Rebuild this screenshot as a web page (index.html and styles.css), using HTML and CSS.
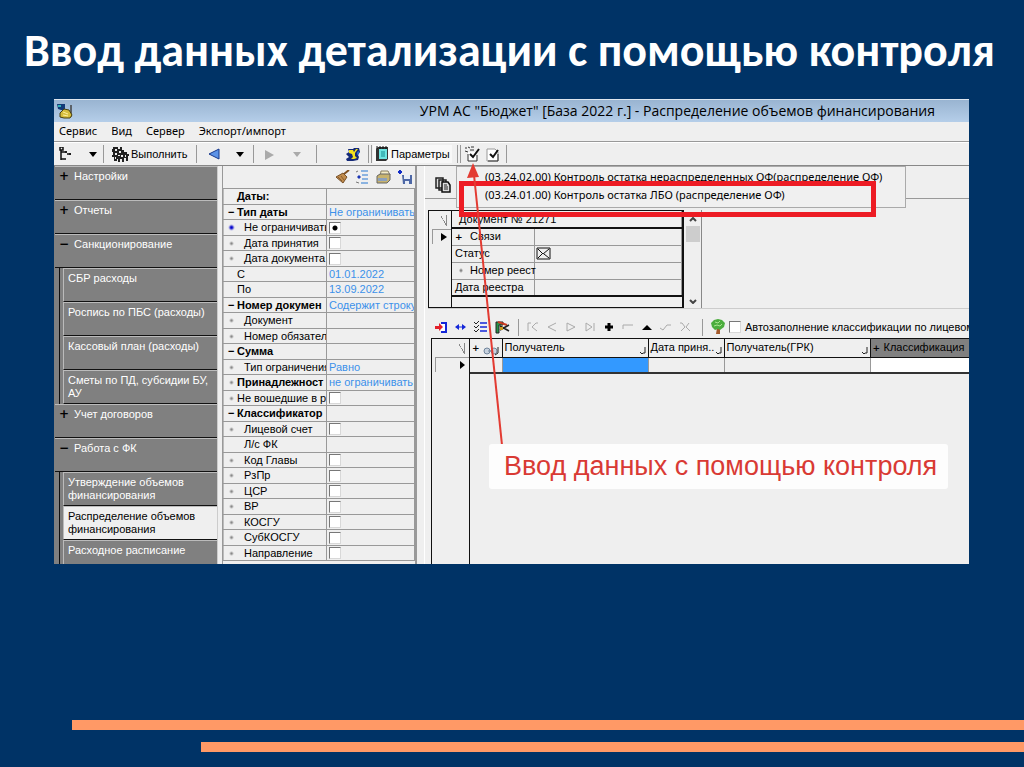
FILE: index.html
```html
<!DOCTYPE html>
<html lang="ru">
<head>
<meta charset="utf-8">
<title>Ввод данных детализации с помощью контроля</title>
<link rel="stylesheet" href="styles.css">
</head>
<body>
<main class="slide">
<h1 class="slide-title">Ввод данных детализации с помощью контроля</h1>

<section class="window">
  <header class="titlebar">
    <svg class="app-icon" width="18" height="16" viewBox="0 0 18 16"><path d="M1 1h8v6H5l-3-1z" fill="#123a78"/><path d="M2 2h3v2H2z" fill="#2fb3b5"/><path d="M15 2v11H6" fill="none" stroke="#444" stroke-width="1.5"/><path d="M4 10l4-4 5 1 3 5-2 3H8l-4-1z" fill="#d5bd3c" stroke="#4a4010"/><path d="M7 9l5 2M7 12l5 1" stroke="#fff09a"/></svg>
    <h2 class="caption">УРМ АС "Бюджет" [База 2022 г.] - Распределение объемов финансирования</h2>
  </header>
  <nav class="menubar">
    <button class="menu">Сервис</button><button class="menu">Вид</button><button class="menu">Сервер</button><button class="menu">Экспорт/импорт</button>
  </nav>
  <div class="toolbar">
    <div class="group g-tree">
      <button class="tool" aria-label="Дерево"><svg width="14" height="14" viewBox="0 0 14 14"><path d="M1 0h3v3H1zM2 3v10M2 5h6M8 7h4M2 12h5M7 4v2M11 6v2" fill="none" stroke="#111" stroke-width="1.5"/></svg></button>
      <button class="tool" aria-label="Список"><svg width="8" height="5"><path d="M0 0h8L4 5z"/></svg></button>
    </div>
    <div class="group g-run">
      <button class="tool"><svg width="17" height="15" viewBox="0 0 17 15"><path d="M1 0h5v2h2V0h2v3h2v2h3v2h2v2h-1v5h-2v-3h-2v4h-2v-3H8v3H6v-3H5v2H2v-4H0V8h1V5H0V2h1z" fill="#222"/><path d="M3 2h2v2H3zM7 4h2v2H7zM3 6h2v2H3zM6 8h2v1H6zM3 10h1v2H3zM9 8h2v2H9zM13 8h1v2h-1z" fill="#eee"/></svg><span>Выполнить</span></button>
    </div>
    <div class="group g-back">
      <button class="tool" aria-label="Назад"><svg width="12" height="12"><path d="M11 1v10L1 6z" fill="#5d93e6" stroke="#17388c"/></svg></button>
      <button class="tool" aria-label="История назад"><svg width="8" height="5"><path d="M0 0h8L4 5z"/></svg></button>
    </div>
    <div class="group g-next">
      <button class="tool" aria-label="Вперед"><svg width="11" height="11"><path d="M1 1v10l9-5z" fill="#aaa"/></svg></button>
      <button class="tool" aria-label="История вперед"><svg width="8" height="5"><path d="M0 0h8L4 5z" fill="#aaa"/></svg></button>
    </div>
    <div class="group g-refresh">
      <button class="tool" aria-label="Обновить"><svg width="16" height="15" viewBox="0 0 16 15"><path d="M3 2h5l1-1h5l1 4-2 3 1 2-1 3-5 1H2l-1-2 3-2-3-3 3-2z" fill="#152a78"/><path d="M4 3h4l1 2 2-3h2l-3 4v3l2 2-3 1H6l2-2-1-3-3-1z" fill="#f4e21c"/><path d="M12 5l2-1v3l-2 1z" fill="#2a66c8"/></svg></button>
    </div>
    <div class="group g-params">
      <button class="tool pressed"><svg width="14" height="16" viewBox="0 0 14 16"><path d="M1 3l2-2h10v12l-2 2H1z" fill="#333"/><path d="M4 3h8v10H4z" fill="#6de4e1"/><path d="M2 0v3M5 0v3M8 0v3M11 0v3" stroke="#111"/><path d="M6 6h4M6 8h4M6 10h4" stroke="#158d91"/></svg><span>Параметры</span></button>
    </div>
    <div class="group g-checks">
      <button class="tool" aria-label="Контроль списком"><svg width="16" height="16" viewBox="0 0 16 16"><path d="M4 6h8v9H4z" fill="#fff"/><path d="M4 8v7h9V9M1 2h2M4 1l2 1M1 5l3 1M6 4h4M7 1h3" fill="none" stroke="#333"/><path d="M6 8l3 3 6-8" fill="none" stroke="#111" stroke-width="2"/></svg></button>
      <button class="tool" aria-label="Контроль"><svg width="14" height="15" viewBox="0 0 14 15"><path d="M1 2h8l3 3v9H1z" fill="#fff" stroke="#999"/><path d="M12 7v7H2" fill="none" stroke="#333"/><path d="M4 7l3 3 5-7" fill="none" stroke="#111" stroke-width="2"/></svg></button>
    </div>
  </div>

  <div class="workspace">
    <nav class="sidebar">
      <a href="#" class="nav"><b>+</b>Настройки</a>
      <a href="#" class="nav"><b>+</b>Отчеты</a>
      <a href="#" class="nav"><b>−</b>Санкционирование</a>
      <div class="branch">
        <a href="#" class="nav">СБР расходы</a>
        <a href="#" class="nav">Роспись по ПБС (расходы)</a>
        <a href="#" class="nav">Кассовый план (расходы)</a>
        <a href="#" class="nav">Сметы по ПД, субсидии БУ, АУ</a>
      </div>
      <a href="#" class="nav"><b>+</b>Учет договоров</a>
      <a href="#" class="nav"><b>−</b>Работа с ФК</a>
      <div class="branch">
        <a href="#" class="nav">Утверждение объемов финансирования</a>
        <a href="#" class="nav current">Распределение объемов финансирования</a>
        <a href="#" class="nav last">Расходное расписание</a>
      </div>
    </nav>

    <section class="params">
      <div class="params-tools">
        <button class="tool" aria-label="Очистить"><svg width="15" height="14" viewBox="0 0 15 14"><path d="M14 0L9 4" stroke="#805020" stroke-width="2"/><path d="M8 3l4 4-4 6-7-6z" fill="#c08b4b" stroke="#76502a"/><path d="M3 7l4 4M6 6l3 4" stroke="#8a5c2c"/></svg></button>
        <button class="tool" aria-label="Список"><svg width="14" height="14" viewBox="0 0 14 14"><path d="M5 1h7M6 5h6M6 9h6M5 13h7" stroke="#6ba0dc" stroke-width="1.5"/><path d="M0 2l2-1M0 12l3 1" stroke="#777"/><path d="M1 7l2-2 2 2-2 2z" fill="#1b35b5"/></svg></button>
        <button class="tool" aria-label="Печать"><svg width="16" height="14" viewBox="0 0 16 14"><path d="M5 1h7l2 4-2 2H4z" fill="#f5edc7" stroke="#887f60"/><path d="M1 6l3-2h10v6l-3 3H1z" fill="#c7b36e" stroke="#666"/><path d="M2 8h9v3H2z" fill="#8ca0bb"/></svg></button>
        <button class="tool" aria-label="Сохранить"><svg width="14" height="14" viewBox="0 0 14 14"><path d="M0 2h4M2 0v4" stroke="#112cc7" stroke-width="2"/><path d="M4 5h10v9H5z" fill="#4e68a6"/><path d="M6 5h6v4H6zM7 11h4v3H7z" fill="#e7edf7"/></svg></button>
      </div>
      <table class="props">
        <colgroup><col class="c-name"><col></colgroup>
        <tr class="head"><th class="in1">Даты:</th><td></td></tr>
        <tr class="head"><th><span class="fold">−</span>Тип даты</th><td>Не ограничивать</td></tr>
        <tr class="dot on"><th><label for="p1">Не ограничивать</label></th><td><input type="radio" id="p1" checked></td></tr>
        <tr class="dot"><th><label for="p2">Дата принятия</label></th><td><input type="checkbox" id="p2"></td></tr>
        <tr class="dot"><th><label for="p3">Дата документа</label></th><td><input type="checkbox" id="p3"></td></tr>
        <tr><th class="in1">С</th><td>01.01.2022</td></tr>
        <tr><th class="in1">По</th><td>13.09.2022</td></tr>
        <tr class="head"><th><span class="fold">−</span>Номер докумен</th><td>Содержит строку</td></tr>
        <tr class="dot"><th>Документ</th><td></td></tr>
        <tr class="dot"><th>Номер обязател</th><td></td></tr>
        <tr class="head"><th><span class="fold">−</span>Сумма</th><td></td></tr>
        <tr class="dot"><th>Тип ограничения</th><td>Равно</td></tr>
        <tr class="head dot near"><th>Принадлежност</th><td>не ограничивать</td></tr>
        <tr class="dot near"><th><label for="p4">Не вошедшие в ре</label></th><td><input type="checkbox" id="p4"></td></tr>
        <tr class="head"><th><span class="fold">−</span>Классификатор</th><td></td></tr>
        <tr class="dot"><th><label for="p5">Лицевой счет</label></th><td><input type="checkbox" id="p5"></td></tr>
        <tr><th class="in2">Л/с ФК</th><td></td></tr>
        <tr class="dot"><th><label for="p6">Код Главы</label></th><td><input type="checkbox" id="p6"></td></tr>
        <tr class="dot"><th><label for="p7">РзПр</label></th><td><input type="checkbox" id="p7"></td></tr>
        <tr class="dot"><th><label for="p8">ЦСР</label></th><td><input type="checkbox" id="p8"></td></tr>
        <tr class="dot"><th><label for="p9">ВР</label></th><td><input type="checkbox" id="p9"></td></tr>
        <tr class="dot"><th><label for="p10">КОСГУ</label></th><td><input type="checkbox" id="p10"></td></tr>
        <tr class="dot"><th><label for="p11">СубКОСГУ</label></th><td><input type="checkbox" id="p11"></td></tr>
        <tr class="dot"><th><label for="p12">Направление</label></th><td><input type="checkbox" id="p12"></td></tr>
      </table>
    </section>

    <section class="content">
      <div class="doc-tools">
        <button class="tool" aria-label="Копировать"><svg width="16" height="16" viewBox="0 0 16 16"><path d="M1 1h7v10H1zM4 3h7v10H4z" fill="#ddd" stroke="#222" stroke-width="1.5"/><path d="M7 5h6l2 3v7H7z" fill="#ddd" stroke="#111" stroke-width="1.5"/><path d="M9 8h3M9 10h4M9 12h4" stroke="#222"/></svg></button>
      </div>
      <div class="doc">
        <div class="doc-frame">
          <div class="row-marks"><i class="corner"></i><i class="cell-mark"><svg width="6" height="8"><path d="M0 0v8l6-4z"/></svg></i></div>
          <table class="doc-table">
            <colgroup><col class="c-doc"><col></colgroup>
            <tr><th colspan="2" class="doc-title">Документ № 21271</th></tr>
            <tr><th><span class="plus">+</span>Связи</th><td></td></tr>
            <tr><th>Статус</th><td><svg width="15" height="13" viewBox="0 0 15 13"><path d="M1 1h13v11H1zM2 2l5 5 6-5M2 11l4-4M13 11L8 7" fill="none" stroke="#111"/></svg></td></tr>
            <tr><th class="doc-sub">Номер реест</th><td></td></tr>
            <tr><th>Дата реестра</th><td></td></tr>
          </table>
        </div>
        <div class="scroll">
          <svg width="8" height="5"><path d="M1 4l3-3 3 3" fill="none" stroke="#444" stroke-width="2"/></svg>
          <i class="thumb"></i>
          <svg width="8" height="5"><path d="M1 1l3 3 3-3" fill="none" stroke="#444" stroke-width="2"/></svg>
        </div>
      </div>
      <div class="detail-tools">
        <button class="tool" aria-label="Выход"><svg width="12" height="11" viewBox="0 0 12 11"><path d="M6 1h5v9H6" fill="#fff" stroke="#1427d8" stroke-width="2"/><path d="M0 4h4V1l4 4-4 4V7H0z" fill="#e3202a"/></svg></button>
        <button class="tool" aria-label="Ширина"><svg width="11" height="8"><path d="M0 4l4-3v6zM11 4L7 1v6z" fill="#1427d8"/><path d="M3 4h5" stroke="#1427d8"/></svg></button>
        <button class="tool" aria-label="Отметки"><svg width="13" height="12" viewBox="0 0 13 12"><path d="M6 2h7M6 6h7M6 10h7" stroke="#1427d8" stroke-width="1.5"/><path d="M0 1l2 2 3-3M0 5l2 2 3-3M0 9l2 2 3-3" fill="none" stroke="#222"/></svg></button>
        <button class="tool" aria-label="Правка"><svg width="15" height="13" viewBox="0 0 15 13"><path d="M1 1h7v3H4v8H1z" fill="#279449" stroke="#222"/><path d="M3 1l9 3" stroke="#cc3b22" stroke-width="2"/><path d="M5 5l9 5M5 9l9-5" stroke="#222" stroke-width="1.5"/><path d="M5 6h3v3H5z" fill="#c99a1c"/></svg></button>
        <span class="bar"></span>
        <button class="tool dim" aria-label="Первая"><svg width="12" height="10"><path d="M1 9V1h3M11 1H9L5 5l5 4" fill="none" stroke="#aaa"/></svg></button>
        <button class="tool dim" aria-label="Предыдущая"><svg width="12" height="10"><path d="M10 1L2 5l8 4" fill="none" stroke="#aaa"/></svg></button>
        <button class="tool dim" aria-label="Следующая"><svg width="12" height="10"><path d="M2 9V1l8 4-8 4" fill="none" stroke="#aaa"/></svg></button>
        <button class="tool dim" aria-label="Последняя"><svg width="12" height="10"><path d="M2 9V1l6 4-6 4M10 1v8" fill="none" stroke="#aaa"/></svg></button>
        <button class="tool dim" aria-label="Добавить"><svg width="10" height="10"><path d="M5 1v8M1 5h8" stroke="#000" stroke-width="3"/></svg></button>
        <button class="tool dim" aria-label="Удалить"><svg width="12" height="6"><path d="M1 5V1h10" fill="none" stroke="#aaa"/></svg></button>
        <button class="tool dim" aria-label="Изменить"><svg width="10" height="5"><path d="M0 5l5-5 5 5z"/></svg></button>
        <button class="tool dim" aria-label="Сохранить запись"><svg width="14" height="10"><path d="M1 6l3 2 4-5h4" fill="none" stroke="#aaa"/></svg></button>
        <button class="tool dim" aria-label="Отменить"><svg width="12" height="10"><path d="M1 1h2l3 4-4 4M10 1L7 5l4 4" fill="none" stroke="#aaa"/></svg></button>
        <span class="bar end"></span>
        <svg class="tree" width="14" height="16" viewBox="0 0 14 16"><path d="M6 9h3v6H5z" fill="#a55c2e"/><path d="M3 1l4-1 4 1 3 3-1 4-4 3-2-1-3 1-3-3-1-4z" fill="#4cad3e"/><path d="M4 3l3 1 2-2M3 7l3-1 3 1 2-2" stroke="#a8e58f" fill="none"/></svg>
        <input type="checkbox" id="auto"><label for="auto">Автозаполнение классификации по лицевом</label>
      </div>
      <div class="detail">
        <div class="row-marks wide"><i class="corner"></i><i class="cell-mark"><svg width="5" height="8"><path d="M0 0v8l5-4z"/></svg></i></div>
        <div class="detail-scroll">
          <table class="detail-table">
            <colgroup><col class="c-link"><col class="c-rec"><col class="c-date"><col class="c-rec"><col></colgroup>
            <thead><tr>
              <th><span class="th"><span class="plus">+</span><svg width="17" height="10" viewBox="0 0 17 10"><path d="M1 5a3 3 0 016 0 3 3 0 01-6 0M8 5a3 3 0 016 0 3 3 0 01-6 0M5 5h5" fill="#c8d2de" stroke="#71859c"/><path d="M15 1v6l-3 2" fill="none" stroke="#222"/></svg></span></th>
              <th><span class="th">Получатель<svg width="7" height="8"><path d="M6 0v6H4L3 7 1 5" fill="none" stroke="#222"/></svg></span></th>
              <th><span class="th">Дата приня..<svg width="7" height="8"><path d="M6 0v6H4L3 7 1 5" fill="none" stroke="#222"/></svg></span></th>
              <th><span class="th">Получатель(ГРК)<svg width="7" height="8"><path d="M6 0v6H4L3 7 1 5" fill="none" stroke="#222"/></svg></span></th>
              <th class="shade"><span class="th"><span class="plus">+</span>Классификация</span></th>
            </tr></thead>
            <tbody><tr><td></td><td class="selected"></td><td></td><td></td><td class="blank"></td></tr></tbody>
          </table>
        </div>
      </div>
    </section>
  </div>

  <div class="popup">
    <button class="popup-item">(03.24.02.00) Контроль остатка нераспределенных ОФ(распределение ОФ)</button>
    <button class="popup-item">(03.24.01.00) Контроль остатка ЛБО (распределение ОФ)</button>
  </div>
  <div class="highlight"></div>
  <svg class="arrow" width="44" height="282" viewBox="0 0 44 282"><path d="M38 282L10 12" stroke="#e33b32" stroke-width="2"/><path d="M9 0L3 15l12-1z" fill="#e33b32"/></svg>
  <p class="callout">Ввод данных с помощью контроля</p>
</section>

<div class="stripes"><i class="stripe"></i><i class="stripe short"></i></div>
</main>
</body>
</html>
```
FILE: styles.css
```css
* { box-sizing: border-box; }
body { margin: 0; background: #003366; color: #000; font: 11px/13px "Liberation Sans", Arial, sans-serif; }
button { border: 0; padding: 0; background: none; font: inherit; color: inherit; }
a { color: inherit; text-decoration: none; }
svg { display: block; flex: none; }
i { display: block; }
input { appearance: none; display: block; flex: none; margin: 0; width: 12px; height: 12px; background: #fff; border: 1px solid #d8d8d8; border-top-color: #777; border-left-color: #777; }
input[type="radio"] { background: radial-gradient(circle, #000 0 2px, #fff 3px); }

.slide { display: flex; flex-direction: column; min-height: 100vh; overflow: hidden; }
.slide-title { margin: 0; padding: 24px 0 23px 24px; font: bold 46px/52px Carlito, Calibri, Lato, sans-serif; color: #fff; white-space: nowrap; }

.window { position: relative; margin: 0 55px 0 54px; background: #efefef; }
.titlebar { display: flex; align-items: center; height: 23px; padding: 0 34px 0 2px; background: linear-gradient(#99b4d1, #b5cee9); border-top: 1px solid #dfe6ee; }
.caption { flex: 1; margin: 0; font: 14px/20px "Open Sans", sans-serif; text-align: right; white-space: nowrap; }
.menubar { display: flex; gap: 14px; height: 20px; padding: 0 5px 2px; font: 11px/16px "Noto Sans", sans-serif; border-bottom: 1px solid #999; }

.toolbar { display: flex; align-items: center; height: 24px; border-top: 1px solid #fff; border-bottom: 1px solid #888; }
.group { display: flex; align-items: center; height: 18px; border-right: 1px solid #999; }
.tool { display: flex; align-items: center; gap: 2px; flex: none; }
.g-tree { width: 50px; padding-left: 5px; gap: 16px; }
.g-run { width: 93px; padding-left: 8px; }
.g-back { width: 57px; padding-left: 11px; gap: 16px; }
.g-next { width: 63px; padding-left: 10px; gap: 18px; }
.g-refresh { width: 52px; padding-left: 28px; }
.g-params { width: 87px; padding-left: 1px; border-left: 1px solid #999; margin-left: 2px; }
.pressed { height: 18px; padding: 0 2px; background: #f8f8f8; }
.g-checks { width: 47px; padding-left: 3px; gap: 6px; border-left: 1px solid #999; margin-left: 2px; }

.workspace { display: flex; }
.sidebar { width: 164px; padding-left: 1px; background: #808080; color: #fff; border-right: 1px solid #ccc; flex: none; }
.nav { display: flex; align-items: flex-start; height: 34px; padding: 3px 8px 0 4px; line-height: 13px; border-top: 1px solid #bbb; border-bottom: 1px solid #111; }
.nav b { flex: none; width: 15px; color: #000; font: bold 12px/12px "DejaVu Sans", sans-serif; }
.branch { margin-left: 4px; padding-left: 3px; border-left: 1px solid #111; }
.branch .nav { padding-left: 4px; border-left: 1px solid #bbb; }
.nav.current { background: #efefef; color: #000; }
.nav.last { height: 24px; border-bottom: 0; }

.params { flex: none; width: 195px; margin-left: 4px; border-left: 1px solid #999; border-right: 2px solid #999; }
.params-tools { display: flex; justify-content: flex-end; align-items: flex-start; gap: 6px; height: 22px; padding: 4px 3px 0; }
.props { width: 100%; table-layout: fixed; border-collapse: collapse; border-left: 1px solid #777; }
.c-name { width: 103px; }
.props tr { height: 16px; }
.props tr:nth-child(even) { height: 15px; }
.props th, .props td { padding: 0 0 0 2px; line-height: 13px; overflow: hidden; white-space: nowrap; text-align: left; font-weight: normal; border: 1px solid #999; border-left-color: #bbb; }
.props td { color: #3c91ea; }
.props .head th { padding-left: 4px; font-weight: bold; }
.fold { display: inline-block; width: 9px; }
.props .head .in1, .props .in1 { padding-left: 13px; }
.props .in2, .props .dot th { padding-left: 20px; }
.props .near th { padding-left: 13px; }
.dot th { background: radial-gradient(circle at 7px 7px, #888 0 1px, transparent 2px); }
.on th { background: radial-gradient(circle at 7px 7px, #00c 0 1px, transparent 3px); }

.content { flex: 1; min-width: 0; margin-left: 7px; border-left: 1px solid #fff; display: flex; flex-direction: column; }
.doc-tools { height: 33px; margin-bottom: 11px; padding: 11px 10px 0; border-bottom: 1px solid #999; }
.doc { display: flex; height: 99px; margin-left: 3px; border-bottom: 1px solid #ccc; }
.doc-frame { display: flex; width: 256px; border: 1px solid #111; border-right-width: 2px; }
.row-marks { display: flex; flex-direction: column; width: 23px; border-right: 1px solid #111; flex: none; }
.corner { width: 6px; height: 11px; margin: 4px 4px 3px auto; background: linear-gradient(60deg, transparent 46%, #888 47% 54%, transparent 55%); border-right: 1px solid #888; }
.cell-mark { display: flex; align-items: center; justify-content: flex-end; height: 15px; margin-left: 3px; padding-right: 4px; border-top: 1px solid #999; border-left: 1px solid #999; }
.doc-table { width: 100%; height: 86px; table-layout: fixed; border-collapse: collapse; border-bottom: 2px solid #111; }
.c-doc { width: 82px; }
.doc-table th, .doc-table td { height: 17px; padding: 0 0 0 3px; white-space: nowrap; text-align: left; font-weight: normal; border-bottom: 1px solid #999; border-right: 1px solid #999; }
.doc-table td { padding-left: 1px; }
.doc-table .doc-title { padding-left: 7px; border-bottom: 2px solid #111; }
.doc-table .doc-sub { padding-left: 18px; background: radial-gradient(circle at 9px 8px, #888 0 1px, transparent 2px); }
.plus { display: inline-block; width: 15px; font: bold 9px/12px "DejaVu Sans", sans-serif; }
.scroll { display: flex; flex-direction: column; align-items: center; width: 18px; padding: 7px 0 4px; border-right: 1px solid #888; }
.thumb { width: 14px; height: 16px; margin: 4px 0 auto; background: #cdcdcd; }

.detail-tools { display: flex; align-items: center; gap: 8px; height: 22px; margin-top: 7px; padding-left: 10px; white-space: nowrap; overflow: hidden; }
.bar { flex: none; width: 1px; height: 17px; background: #999; }
.dim { width: 11px; justify-content: center; }
.end { margin-left: 4px; }
.tree { margin-right: -4px; }
.detail-tools label { margin-left: -4px; }
.detail { display: flex; flex: 1; margin-left: 6px; border-top: 1px solid #111; border-left: 1px solid #111; }
.wide { width: 38px; }
.detail-scroll { flex: 1; min-width: 0; overflow: hidden; }
.detail-table { width: 100%; table-layout: fixed; border-collapse: collapse; }
.c-link { width: 32px; } .c-rec { width: 146px; } .c-date { width: 76px; }
.detail-table th { height: 18px; padding: 0 2px; text-align: left; font-weight: normal; border-right: 1px solid #111; border-bottom: 1px solid #111; white-space: nowrap; }
.detail-table td { height: 16px; padding: 0; border-right: 1px solid #999; border-bottom: 2px solid #333; }
.th { display: flex; align-items: center; }
.th > svg { margin: 6px 0 0 auto; }
.th .plus { width: 11px; }
.detail-table .shade { background: #808080; border-right: 0; }
.detail-table .selected { background: #3399ff; }
.detail-table .blank { background: #fff; border-right: 0; }

.popup { position: absolute; left: 402px; top: 67px; width: 450px; height: 42px; padding: 1px 0 0 28px; background: #f0f0f0; border: 1px solid #aaa; }
.popup-item { display: block; font: 11px/18px "Noto Sans", sans-serif; white-space: nowrap; }
.highlight { position: absolute; left: 405px; top: 82px; width: 417px; height: 36px; border: 5px solid #ed1c24; }
.arrow { position: absolute; left: 410px; top: 64px; }
.callout { position: absolute; left: 435px; top: 345px; width: 459px; margin: 0; padding: 8px 15px; font-size: 27px; line-height: 29px; color: #d93a34; background: #fdfdfd; border-radius: 3px; white-space: nowrap; }

.stripes { display: flex; flex-direction: column; gap: 12px; margin: auto 0 15px 72px; }
.stripe { height: 10px; background: #ff9966; }
.short { margin-left: 129px; }
```
